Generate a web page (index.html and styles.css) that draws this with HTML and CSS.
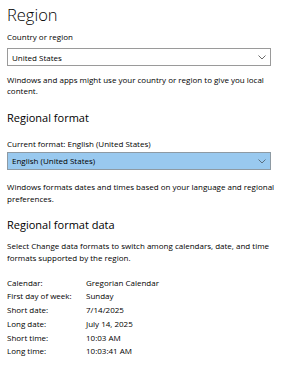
FILE: index.html
```html
<!DOCTYPE html>
<html lang="en">
<head>
<meta charset="utf-8">
<title>Region</title>
<link rel="stylesheet" href="styles.css">
</head>
<body>
<main class="page">
  <h1 class="title">Region</h1>

  <section class="group">
    <div class="field-label field-label--first">Country or region</div>
    <div class="select select--first">
      <span class="select__text">United States</span>
      <svg class="chevron" width="8" height="5" viewBox="0 0 8 5" aria-hidden="true"><polyline points="0.5,0.5 4,4 7.5,0.5" fill="none" stroke="#6b6b6b" stroke-width="1"/></svg>
    </div>
    <p class="desc desc--first">Windows and apps might use your country or region to give you local content.</p>
  </section>

  <h2 class="heading heading--format">Regional format</h2>
  <section class="group">
    <div class="field-label field-label--second">Current format: English (United States)</div>
    <div class="select select--active">
      <span class="select__text">English (United States)</span>
      <svg class="chevron" width="8" height="5" viewBox="0 0 8 5" aria-hidden="true"><polyline points="0.5,0.5 4,4 7.5,0.5" fill="none" stroke="#5a6f80" stroke-width="1"/></svg>
    </div>
    <p class="desc desc--second">Windows formats dates and times based on your language and regional preferences.</p>
  </section>

  <h2 class="heading heading--data">Regional format data</h2>
  <p class="desc desc--third">Select Change data formats to switch among calendars, date, and time formats supported by the region.</p>

  <dl class="data">
    <dt>Calendar:</dt><dd>Gregorian Calendar</dd>
    <dt>First day of week:</dt><dd>Sunday</dd>
    <dt>Short date:</dt><dd>7/14/2025</dd>
    <dt>Long date:</dt><dd>July 14, 2025</dd>
    <dt>Short time:</dt><dd>10:03 AM</dd>
    <dt>Long time:</dt><dd>10:03:41 AM</dd>
  </dl>
</main>
</body>
</html>
```
FILE: styles.css
```css
html, body {
  margin: 0;
  padding: 0;
  background: #ffffff;
}

body {
  font-family: "Open Sans", "Noto Sans", sans-serif;
  color: #000000;
  font-size: 8px;
}

.page {
  padding: 4px 0 0 7px;
  width: 280px;
}

.title {
  margin: 0;
  font-size: 16.5px;
  font-weight: 300;
  line-height: 22px;
}

.field-label {
  font-size: 8px;
  line-height: 11px;
}

.field-label--first { margin-top: 5px; }
.field-label--second { margin-top: 11.5px; }

.select {
  box-sizing: border-box;
  height: 18px;
  width: 264px;
  border: 1px solid #9a9a9a;
  display: flex;
  align-items: center;
  justify-content: space-between;
  padding: 0 4px 0 4px;
  background: #ffffff;
}

.select--first { margin-top: 6px; }

.select--active {
  margin-top: 3px;
  background: #99c9ef;
  border-color: #8e9aa3;
}

.select__text {
  font-size: 8px;
  line-height: 11px;
}

.chevron {
  display: block;
  margin-top: 1px;
}

.desc {
  margin: 0;
  width: 276px;
  font-size: 8px;
  line-height: 11.4px;
}

.desc--first { margin-top: 7.6px; }
.desc--second { margin-top: 11.6px; }
.desc--third { margin-top: 7.3px; }

.heading {
  margin: 0;
  font-size: 11px;
  font-weight: 400;
  line-height: 16px;
}

.heading--format { margin-top: 13.9px; }
.heading--data { margin-top: 12.6px; }

.data {
  margin: 12.3px 0 0 0;
  display: grid;
  grid-template-columns: 79px 1fr;
  grid-auto-rows: 13.75px;
  align-items: center;
}

.data dt,
.data dd {
  margin: 0;
  font-size: 8px;
  line-height: 11px;
}
```
